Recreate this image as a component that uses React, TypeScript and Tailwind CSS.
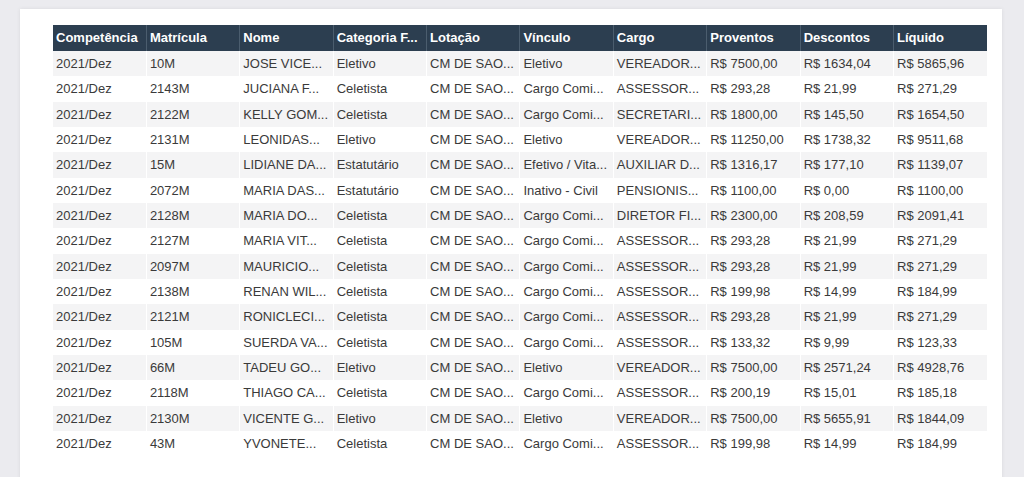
import React from "react";

const headers = [
  "Competência",
  "Matrícula",
  "Nome",
  "Categoria F...",
  "Lotação",
  "Vínculo",
  "Cargo",
  "Proventos",
  "Descontos",
  "Líquido",
];

const rows: string[][] = [
  ["2021/Dez", "10M", "JOSE VICE...", "Eletivo", "CM DE SAO...", "Eletivo", "VEREADOR...", "R$ 7500,00", "R$ 1634,04", "R$ 5865,96"],
  ["2021/Dez", "2143M", "JUCIANA F...", "Celetista", "CM DE SAO...", "Cargo Comi...", "ASSESSOR...", "R$ 293,28", "R$ 21,99", "R$ 271,29"],
  ["2021/Dez", "2122M", "KELLY GOM...", "Celetista", "CM DE SAO...", "Cargo Comi...", "SECRETARI...", "R$ 1800,00", "R$ 145,50", "R$ 1654,50"],
  ["2021/Dez", "2131M", "LEONIDAS...", "Eletivo", "CM DE SAO...", "Eletivo", "VEREADOR...", "R$ 11250,00", "R$ 1738,32", "R$ 9511,68"],
  ["2021/Dez", "15M", "LIDIANE DA...", "Estatutário", "CM DE SAO...", "Efetivo / Vita...", "AUXILIAR D...", "R$ 1316,17", "R$ 177,10", "R$ 1139,07"],
  ["2021/Dez", "2072M", "MARIA DAS...", "Estatutário", "CM DE SAO...", "Inativo - Civil", "PENSIONIS...", "R$ 1100,00", "R$ 0,00", "R$ 1100,00"],
  ["2021/Dez", "2128M", "MARIA DO...", "Celetista", "CM DE SAO...", "Cargo Comi...", "DIRETOR FI...", "R$ 2300,00", "R$ 208,59", "R$ 2091,41"],
  ["2021/Dez", "2127M", "MARIA VIT...", "Celetista", "CM DE SAO...", "Cargo Comi...", "ASSESSOR...", "R$ 293,28", "R$ 21,99", "R$ 271,29"],
  ["2021/Dez", "2097M", "MAURICIO...", "Celetista", "CM DE SAO...", "Cargo Comi...", "ASSESSOR...", "R$ 293,28", "R$ 21,99", "R$ 271,29"],
  ["2021/Dez", "2138M", "RENAN WIL...", "Celetista", "CM DE SAO...", "Cargo Comi...", "ASSESSOR...", "R$ 199,98", "R$ 14,99", "R$ 184,99"],
  ["2021/Dez", "2121M", "RONICLECI...", "Celetista", "CM DE SAO...", "Cargo Comi...", "ASSESSOR...", "R$ 293,28", "R$ 21,99", "R$ 271,29"],
  ["2021/Dez", "105M", "SUERDA VA...", "Celetista", "CM DE SAO...", "Cargo Comi...", "ASSESSOR...", "R$ 133,32", "R$ 9,99", "R$ 123,33"],
  ["2021/Dez", "66M", "TADEU GO...", "Eletivo", "CM DE SAO...", "Eletivo", "VEREADOR...", "R$ 7500,00", "R$ 2571,24", "R$ 4928,76"],
  ["2021/Dez", "2118M", "THIAGO CA...", "Celetista", "CM DE SAO...", "Cargo Comi...", "ASSESSOR...", "R$ 200,19", "R$ 15,01", "R$ 185,18"],
  ["2021/Dez", "2130M", "VICENTE G...", "Eletivo", "CM DE SAO...", "Eletivo", "VEREADOR...", "R$ 7500,00", "R$ 5655,91", "R$ 1844,09"],
  ["2021/Dez", "43M", "YVONETE...", "Celetista", "CM DE SAO...", "Cargo Comi...", "ASSESSOR...", "R$ 199,98", "R$ 14,99", "R$ 184,99"],
];

export default function App() {
  return (
    <div
      className="w-[1024px] h-[477px] bg-[#ebebef] pt-[9px] pl-[20px] overflow-hidden"
      style={{ fontFamily: '"Liberation Sans", Arial, sans-serif' }}
    >
      <div className="w-[982px] h-[480px] bg-white shadow-[0_0_4px_rgba(0,0,0,0.08)] pt-[16px] pl-[33px]">
        <table className="table-fixed border-collapse w-[934px] text-[13px]">
          <thead>
            <tr className="bg-[#2c3e50] h-[26px]">
              {headers.map((h, i) => (
                <th
                  key={i}
                  className={`text-left font-bold text-white pl-[3px] pr-0 py-0 whitespace-nowrap overflow-hidden ${
                    i > 0 ? "border-l border-[#4b5d6e]" : ""
                  }`}
                >
                  {h}
                </th>
              ))}
            </tr>
          </thead>
          <tbody>
            {rows.map((r, ri) => (
              <tr key={ri} className={`h-[25.33px] ${ri % 2 === 0 ? "bg-[#f4f4f5]" : "bg-white"}`}>
                {r.map((c, ci) => (
                  <td
                    key={ci}
                    className={`text-[#3a3a3a] pl-[3px] py-0 whitespace-nowrap overflow-hidden ${
                      ci > 0 ? "border-l border-transparent" : ""
                    }`}
                  >
                    {c}
                  </td>
                ))}
              </tr>
            ))}
          </tbody>
        </table>
      </div>
    </div>
  );
}
